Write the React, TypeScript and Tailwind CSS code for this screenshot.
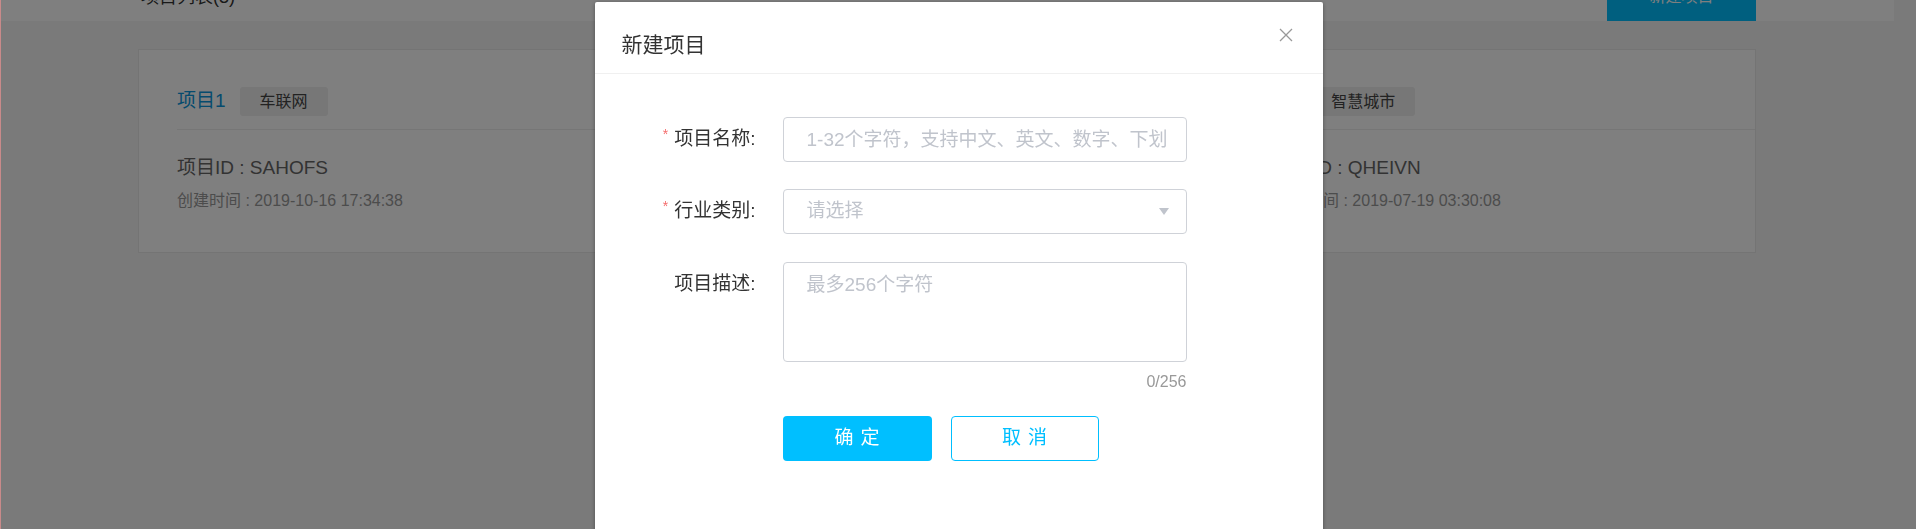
type Project = {
  name: string
  industry: string
  code: string
  created_at: string
}

const projects: Project[] = [
  { name: '项目1', industry: '车联网', code: 'SAHOFS', created_at: '2019-10-16 17:34:38' },
  { name: '项目2', industry: '智能家居', code: 'KXPLMD', created_at: '2019-09-02 10:12:45' },
  { name: 'T1', industry: '智慧城市', code: 'QHEIVN', created_at: '2019-07-19 03:30:08' },
]

const font = "font-['Liberation_Sans','Noto_Sans_CJK_SC',sans-serif]"

export default function App() {
  return (
    <div className={`flow-root min-h-screen overflow-hidden bg-[#f4f4f4] ${font}`}>
      <div className="w-[1894px]">
        {/* Header */}
        <div className="-mt-[27px] h-[48px] bg-white">
          <div className="mx-auto flex h-full w-[1618px] items-center justify-between">
            <h1 className="pl-[3px] text-[18px] text-[#333]">项目列表(3)</h1>
            <button className="h-full w-[149px] bg-[#00bfff] text-[16px] text-white">新建项目</button>
          </div>
        </div>

        {/* Project list */}
        <div className="mx-auto mt-[28px] w-[1618px] border border-[#e8e8e8] bg-white pl-[38px]">
          <div className="grid grid-cols-3 gap-x-[69px]">
            {projects.map(p => (
              <ProjectItem key={p.code} project={p} />
            ))}
          </div>
        </div>
      </div>

      {/* Dialog */}
      <div className="fixed inset-0 flex justify-center border-l border-l-[#c98a8a] bg-black/50">
        <div className="relative mt-[2px] h-[600px] w-[728px] rounded-[2px] bg-white shadow-[0_1px_4px_rgba(0,0,0,0.35)]">
          <div className="border-b border-[#f0f0f0] px-[27px] pt-[29px] pb-[14px]">
            <h2 className="text-[21px] leading-[28px] text-[#333]">新建项目</h2>
          </div>
          <button className="absolute top-[26px] right-[30px]">
            <svg width="14" height="14" viewBox="0 0 14 14" fill="none" stroke="#999" strokeWidth="1.3">
              <path d="M1 1 L13 13 M13 1 L1 13" />
            </svg>
          </button>

          <div className="pt-[43px] pl-[61px] text-[19px]">
            <div className="flex items-center">
              <Label required text="项目名称" />
              <input
                className="ml-[27px] h-[45px] w-[404px] rounded-[4px] border border-[#cfd2d8] pr-[19px] pl-[23px] text-[19px] text-[#333] outline-none placeholder:text-[#c0c4cc]"
                placeholder="1-32个字符，支持中文、英文、数字、下划线"
              />
            </div>

            <div className="mt-[27px] flex items-center">
              <Label required text="行业类别" />
              <div className="ml-[27px] flex h-[45px] w-[404px] items-center justify-between rounded-[4px] border border-[#cfd2d8] pr-[17px] pl-[23px]">
                <span className="text-[#c0c4cc]">请选择</span>
                <svg width="10" height="7" viewBox="0 0 10 7">
                  <path d="M0 0 L10 0 L5 7 Z" fill="#c0c4cc" />
                </svg>
              </div>
            </div>

            <div className="mt-[28px] flex items-start">
              <Label text="项目描述" />
              <textarea
                className="ml-[27px] h-[100px] w-[404px] resize-none rounded-[4px] border border-[#cfd2d8] px-[23px] pt-[8px] text-[19px] leading-[28px] text-[#333] outline-none placeholder:text-[#c0c4cc]"
                placeholder="最多256个字符"
              />
            </div>
            <div className="ml-[127px] w-[404px] pt-[10px] text-right text-[16px] leading-[20px] text-[#999]">0/256</div>

            <div className="mt-[24px] ml-[127px] flex gap-[19px]">
              <button className="flex h-[45px] w-[149px] items-center justify-center rounded-[4px] bg-[#00bfff] pl-[7px] text-[19px] tracking-[7px] text-white">
                确定
              </button>
              <button className="flex h-[45px] w-[148px] items-center justify-center rounded-[4px] border border-[#00bfff] bg-white pl-[7px] text-[19px] tracking-[7px] text-[#00bfff]">
                取消
              </button>
            </div>
          </div>
        </div>
      </div>
    </div>
  )
}

function Label({ text, required }: { text: string; required?: boolean }) {
  return (
    <label className="flex h-[45px] w-[100px] shrink-0 items-center justify-end whitespace-nowrap text-[#333]">
      {required && <span className="mr-[6px] self-start pt-[10px] text-[14px] leading-[14px] text-[#f56c6c]">*</span>}
      {text}:
    </label>
  )
}

function ProjectItem({ project: p }: { project: Project }) {
  return (
    <div className="pt-[37px] pb-[41px]">
      <div className="flex h-[29px] items-center">
        <span className="text-[19px] text-[#0a96dc]">{p.name}</span>
        <span className="ml-[14px] flex h-[29px] items-center rounded-[3px] bg-[#eeeeee] px-[20px] text-[16px] text-[#444]">
          {p.industry}
        </span>
      </div>
      <div className="mt-[13px] border-b border-[#ececec]" />
      <p className="mt-[26px] text-[19px] leading-[24px] text-[#666]">项目ID : {p.code}</p>
      <p className="mt-[11px] text-[16px] leading-[20px] text-[#999]">创建时间 : {p.created_at}</p>
    </div>
  )
}
